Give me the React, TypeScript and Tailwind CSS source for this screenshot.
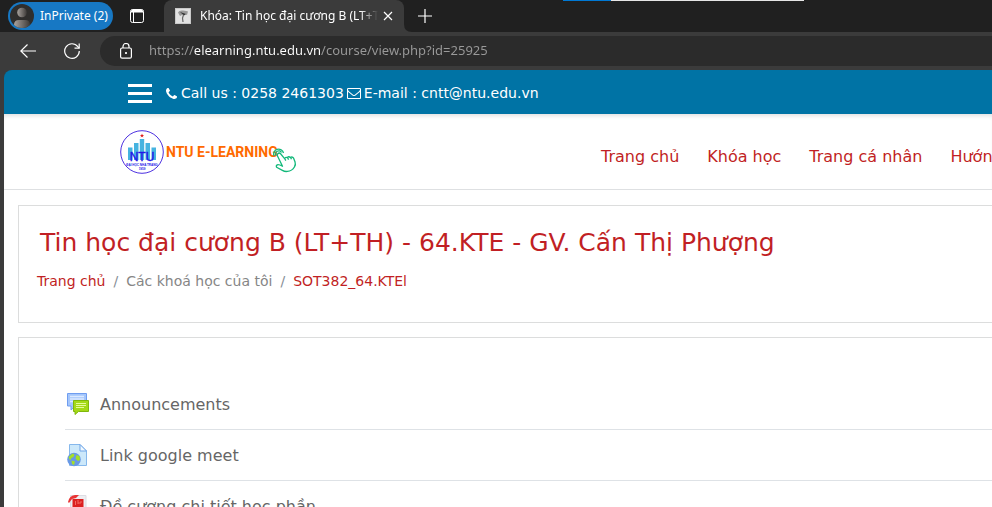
import type { ReactNode } from "react";

function BrowserTabs() {
  return (
    <div className="relative flex h-8 items-stretch bg-[#202020]">
      <div className="flex w-[164px] shrink-0 items-center pl-2">
        <button className="flex h-7 w-[105px] shrink-0 items-center gap-[6px] rounded-full bg-[#1778c4] pl-[2px] text-xs text-white">
          <svg viewBox="0 0 24 24" className="size-6 shrink-0">
            <defs>
              <linearGradient id="person" x1="0" x2="1">
                <stop offset="0" stopColor="#a8a29e" />
                <stop offset="1" stopColor="#3d3a38" />
              </linearGradient>
              <clipPath id="round">
                <circle cx="12" cy="12" r="12" />
              </clipPath>
            </defs>
            <g clipPath="url(#round)">
              <rect width="24" height="24" fill="#2f2e2d" />
              <circle cx="12" cy="8.500" r="4.800" fill="url(#person)" />
              <path d="M4 25v-4q0-5 5-5h6q5 0 5 5v4z" fill="url(#person)" />
            </g>
          </svg>
          <span className="whitespace-nowrap">InPrivate (2)</span>
        </button>
        <button aria-label="Tab actions" className="ml-[17px]">
          <svg viewBox="0 0 14 14" className="size-[14px]" fill="none" stroke="white">
            <rect x="0.500" y="0.500" width="13" height="13" rx="2" />
            <path d="M1 2.500h12M2 1.500h10" strokeWidth="2" />
            <path d="M3.500 3v10" />
          </svg>
        </button>
      </div>
      <div className="flex w-60 shrink-0 items-center rounded-t-lg bg-[#3b3b3b] pl-[11px] pr-2 text-xs text-white">
        <svg viewBox="0 0 16 16" className="size-4 shrink-0">
          <rect width="16" height="16" fill="#c9c9c9" />
          <rect x="1" y="1" width="14" height="14" fill="#e2e2e2" />
          <path d="M3 4.500Q4 2 8 2.500t5 1L12 7 9 6 5 8z" fill="#999" />
          <path d="M5 4l6 2-2 1.500z" fill="#333" />
          <path d="M8.500 7l-1 3 .5 4" fill="none" stroke="#666" strokeWidth="1.200" />
        </svg>
        <span className="ml-[9px] w-[178px] overflow-hidden whitespace-nowrap [mask-image:linear-gradient(to_right,black_90%,transparent)]">
          Khóa: Tin học đại cương B (LT+TH)
        </span>
        <button aria-label="Close tab" className="ml-[5px] shrink-0">
          <svg viewBox="0 0 10 10" className="size-[10px]" stroke="white" strokeWidth="1.200">
            <path d="M1 1l8 8M9 1l-8 8" />
          </svg>
        </button>
      </div>
      <svg viewBox="0 0 8 8" className="size-2 self-end" fill="#3b3b3b">
        <path d="M0 0v8h8Q0 8 0 0z" />
      </svg>
      <button aria-label="New tab" className="ml-[6px] shrink-0">
        <svg viewBox="0 0 14 14" className="size-[14px]" stroke="white" strokeWidth="1.200">
          <path d="M7 0v14M0 7h14" />
        </svg>
      </button>
      <div className="absolute left-[563px] top-0 flex h-px w-[241px]">
        <div className="w-12 bg-[#0078d4]" />
        <div className="flex-1 bg-[#e6e6e6]" />
      </div>
    </div>
  );
}

function AddressBar() {
  return (
    <div className="flex h-[38px] items-center bg-[#3b3b3b] pl-5">
      <button aria-label="Back">
        <svg viewBox="0 0 16 14" className="h-[14px] w-4" fill="none" stroke="white" strokeWidth="1.200">
          <path d="M16 7H.8M7.500.5L.8 7l6.700 6.500" />
        </svg>
      </button>
      <button aria-label="Refresh" className="ml-7">
        <svg viewBox="0 0 16 16" className="size-4" fill="none" stroke="white" strokeWidth="1.200">
          <path d="M15.300 8A7.300 7.300 0 1 1 13.800 3.600L15.200 5" />
          <path d="M15.200.5v4.700h-4.700" />
        </svg>
      </button>
      <div className="ml-5 flex h-[30px] flex-1 items-center rounded-l-full bg-[#2b2b2b] pl-5">
        <svg viewBox="0 0 12 16" className="h-4 w-3 shrink-0" fill="none" stroke="white" strokeWidth="1.200">
          <rect x=".6" y="5" width="10.800" height="10.200" rx="1.500" />
          <path d="M3 5V3.500a3 3 0 0 1 6 0V5" />
          <circle cx="6" cy="10" r=".5" fill="white" />
        </svg>
        <input
          aria-label="Address"
          readOnly
          value="https://elearning.ntu.edu.vn/course/view.php?id=25925"
          className="ml-[17px] min-w-0 flex-1 bg-[linear-gradient(to_right,#9a9a9a_45px,white_45px,white_171px,#9a9a9a_171px)] bg-clip-text text-[13px] text-transparent outline-none"
        />
      </div>
    </div>
  );
}

function ContactBar() {
  return (
    <div className="flex h-11 items-center rounded-tl-lg bg-[#0073a5] pl-[124px] pt-[2px] text-sm text-white">
      <button aria-label="Menu" className="mr-[14px] flex w-6 flex-col gap-[5px]">
        <span className="h-[3px] bg-white" />
        <span className="h-[3px] bg-white" />
        <span className="h-[3px] bg-white" />
      </button>
      <svg viewBox="0 128 1408 1408" className="mr-1 size-[11px]" fill="white">
        <path d="M1408 1240q0 27-10 70.500t-21 68.500q-21 50-122 106-94 51-186 51-27 0-53-3.500t-57.500-12.500-47-14.500-55.500-20.500-49-18q-98-35-175-83-127-79-264-216t-216-264q-48-77-83-175-3-9-18-49t-20.500-55.500-14.500-47-12.500-57.500-3.500-53q0-92 51-186 56-101 106-122 25-10 68.500-21t70.500-11q14 0 21 3 18 6 53 76 11 19 30 54t35 63.500 31 53.500q3 4 17.500 25t21.500 35.500 7 28.500q0 20-28.500 50t-62 55-62 53-28.500 46q0 9 5 22.500t8.500 20.500 14 24 11.500 19q76 137 174 235t235 174q2 1 19 11.500t24 14 20.500 8.500 22.500 5q18 0 46-28.500t53-62 55-62 50-28.500q14 0 28.500 7t35.500 21.500 25 17.500q25 15 53.500 31t63.500 35 54 30q70 35 76 53 3 7 3 21z" />
      </svg>
      <span>Call us : 0258 2461303</span>
      <svg viewBox="0 256 1792 1408" className="mx-[3px] h-[11px] w-[14px]" fill="white">
        <path d="M1664 1504v-768q-32 36-69 66-268 206-426 338-51 43-83 67t-86.500 48.500-102.500 24.500h-2q-48 0-102.500-24.500t-86.500-48.500-83-67q-158-132-426-338-37-30-69-66v768q0 13 9.500 22.500t22.500 9.500h1472q13 0 22.500-9.500t9.500-22.500zm0-1051v-24.500l-.5-13-3-12.500-5.500-9-9-7.500-14-2.500h-1472q-13 0-22.500 9.500t-9.500 22.500q0 168 147 284 193 152 401 317 6 5 35 29.500t46 37.500 44.500 31.500 50.500 27.500 43 9h2q20 0 43-9t50.500-27.500 44.500-31.500 46-37.500 35-29.500q208-165 401-317 54-43 100.500-115.500t46.500-131.500zm128-37v1088q0 66-47 113t-113 47h-1472q-66 0-113-47t-47-113v-1088q0-66 47-113t113-47h1472q66 0 113 47t47 113z" />
      </svg>
      <span>E-mail : cntt@ntu.edu.vn</span>
    </div>
  );
}

function Logo() {
  return (
    <a href="#home" className="flex w-[178px] shrink-0 items-center">
      <svg viewBox="0 0 44 44" className="size-11 shrink-0">
        <circle cx="22" cy="22" r="21.300" fill="white" stroke="#4b2fe0" />
        <path d="M8 17.500h4.500V30H8zM14 13h4.500v17H14zM19.800 9h4.400v21h-4.400zM25.500 13H30v17h-4.500zM31.500 17.500H36V30h-4.500z" fill="#45b3e0" />
        <path d="M22 3.500l.6 1.400 1.500.1-1.200.9.400 1.500-1.300-.8-1.300.8.400-1.500-1.200-.9 1.500-.1z" fill="#e02020" />
        <text x="22" y="30.500" textAnchor="middle" className="text-[12px]" fontFamily="Liberation Sans, sans-serif" fill="#2416e8" stroke="#2416e8" strokeWidth="0.400">NTU</text>
        <text x="22" y="35.500" textAnchor="middle" className="text-[3px] font-bold" fontFamily="Liberation Sans, sans-serif" fill="#2416e8">ĐẠI HỌC NHA TRANG</text>
        <text x="22" y="39.500" textAnchor="middle" className="text-[3px] font-bold" fontFamily="Liberation Sans, sans-serif" fill="#2416e8">1959</text>
      </svg>
      <span className="ml-[2px] w-[106px] shrink-0 whitespace-nowrap font-['Roboto',sans-serif] text-sm font-bold text-[#ff6a00]">
        NTU E-LEARNING
      </span>
      <svg viewBox="0 0 25 26" className="mt-4 h-[26px] w-[25px] shrink-0" fill="none" stroke="#12b87a" strokeWidth="1.300" strokeLinejoin="round">
        <path d="M2 9A5 5 0 1 1 11.500 6M4 8.500A3 3 0 1 1 9.500 5.500" />
        <path d="M5.800 6.800q1.400-1.600 2.800 0l4.200 5q.2-2 2.600-1.200 1.200-1.600 3-.2 2-1.200 3.200.8l1.400 3.600q1 3-.6 5.200-2.400 4-7 4.400-2.600.4-5-1L4.600 20.300q-.8-1.800.7-2.500 1.500-.5 5.200 1.400L5.500 9q-.6-1.200.3-2.200zM12.800 11.800l1 1.800M15.600 10.800l1 1.800M18.500 10.400l1 1.800" />
      </svg>
    </a>
  );
}

function SiteHeader() {
  return (
    <header className="flex h-[76px] items-center border-b border-[#dee0e2] bg-white pl-[116px] pt-px shadow-[inset_0_4px_4px_-2px_#0000001f]">
      <Logo />
      <nav className="ml-[303px] flex gap-7 whitespace-nowrap pt-[9px] text-base text-[#c11f24]">
        <a href="#home">Trang chủ</a>
        <a href="#courses">Khóa học</a>
        <a href="#dashboard">Trang cá nhân</a>
        <a href="#guide">Hướng dẫn</a>
      </nav>
    </header>
  );
}

function ForumIcon() {
  return (
    <svg viewBox="0 0 24 24" className="size-6">
      <path d="M.5 1.500h19v12.500H8.500L4 18v-4H.5z" fill="#a4c6fb" stroke="#6f9df0" />
      <path d="M3 4.500h14M3 7h14M3 9.500h5" stroke="#dceaff" strokeWidth="1.600" />
      <path d="M6.500 8.500h15v11H11.500L8 22.500v-3H6.500z" fill="#a4d916" stroke="#7fb70c" />
      <path d="M9 11.500h10M9 13.500h10M9 15.500h8" stroke="#e5fa9c" />
    </svg>
  );
}

function UrlIcon() {
  return (
    <svg viewBox="0 0 24 24" className="size-6">
      <path d="M2.500 1.500H13L19.500 8v14.500h-17z" fill="#cce8fa" stroke="#86b8ec" />
      <path d="M13 1.500V8h6.500z" fill="#f1f9ff" stroke="#6fa5e8" />
      <circle cx="7" cy="16.500" r="6.800" fill="#6798e6" />
      <path d="M1.500 14l4-3.500 2 1-1 2.500-2 1-1.500 2.500zM9.500 12l3 1 .5 4-2 1-2.500-2.500zM4.500 17.500l3.500 1-1 3.500-2-1z" fill="#a5df28" />
    </svg>
  );
}

function PdfIcon() {
  return (
    <svg viewBox="0 0 24 24" className="size-6">
      <path d="M3.500 1.500H19v21H3.500z" fill="#eeeef1" stroke="#dddde4" />
      <path d="M1 8q1-6 7-7h4L9 4 5 5 2 9z" fill="#e93434" />
      <rect x="5.500" y="5" width="11" height="16" fill="#dc2020" />
      <path d="M8.500 7v4M11 6v4M11 9h3V7" stroke="#f26a62" fill="none" />
    </svg>
  );
}

function Activity({ icon, title }: { icon: ReactNode; title: string }) {
  return (
    <li className="border-b border-[#dee2e6] pl-[2px]">
      <a href="#activity" className="flex h-[50px] items-center gap-[9px]">
        {icon}
        <span className="pt-[2px]">{title}</span>
      </a>
    </li>
  );
}

export default function App() {
  return (
    <div className="flex h-screen flex-col overflow-hidden bg-[#3b3b3b] font-['Noto_Sans',sans-serif]">
      <BrowserTabs />
      <AddressBar />
      <div className="ml-1 flex min-h-0 flex-1 flex-col overflow-hidden font-['DejaVu_Sans',sans-serif] *:shrink-0">
        <ContactBar />
        <SiteHeader />
        <main className="bg-white pl-[14px] pt-[15px]">
          <section className="h-[118px] border-y border-l border-[#dcdddd] pl-[18px] pt-[18px] text-[#c11f24]">
            <h1 className="whitespace-nowrap pl-[3px] text-[25px] leading-[38px]">Tin học đại cương B (LT+TH) - 64.KTE - GV. Cấn Thị Phượng</h1>
            <nav aria-label="Breadcrumb" className="mt-[9px] flex gap-2 whitespace-nowrap text-sm">
              <a href="#home">Trang chủ</a>
              <span className="text-[#868e96]">/</span>
              <span className="text-[#868686]">Các khoá học của tôi</span>
              <span className="text-[#868e96]">/</span>
              <a href="#course">SOT382_64.KTEl</a>
            </nav>
          </section>
          <section className="mt-[14px] border-l border-t border-[#dcdddd] pl-[46px] pt-[41px]">
            <ul className="text-base text-[#666]">
              <Activity icon={<ForumIcon />} title="Announcements" />
              <Activity icon={<UrlIcon />} title="Link google meet" />
              <Activity icon={<PdfIcon />} title="Đề cương chi tiết học phần" />
            </ul>
          </section>
        </main>
      </div>
    </div>
  );
}
